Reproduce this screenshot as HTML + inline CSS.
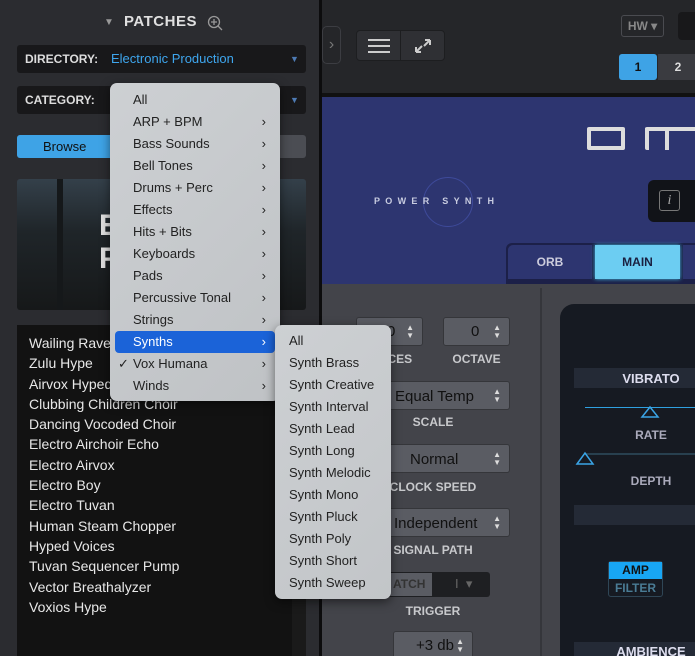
<!DOCTYPE html>
<html><head><style>
*{margin:0;padding:0;box-sizing:border-box}
html,body{width:695px;height:656px;overflow:hidden}
body{background:#252629;font-family:"Liberation Sans",sans-serif;position:relative}
.a{position:absolute}
.lbl{color:#c8c9cc;font-weight:bold;font-size:12px;text-align:center}
.spin{background:#5a5c63;border:1px solid #35363a;border-radius:3px;color:#111;font-size:15px}
.arr{position:absolute;right:8px;top:50%;transform:translateY(-50%);color:#ddd;font-size:8px;line-height:8px}
.mi{position:absolute;left:0;width:100%;height:22px;line-height:22px;font-size:13px;color:#222;padding-left:23px}
.mi .c{position:absolute;right:14px;top:0;font-size:13px}
.li{height:20.3px;line-height:20.3px;color:#e8e8e8;font-size:14px}
</style></head><body>
<div class="a" style="left:0;top:0;width:695px;height:656px;overflow:hidden">
<!-- right top bar -->
<div class="a" style="left:320px;top:0;width:375px;height:95px;background:#252629"></div>
<div class="a" style="left:322px;top:26px;width:19px;height:38px;border:1px solid #3c3d42;border-radius:5px;color:#777;font-size:16px;line-height:36px;text-align:center">›</div>
<div class="a" style="left:356px;top:30px;width:89px;height:31px;background:#2f3034;border:1px solid #1d1e20;border-radius:4px"></div>
<div class="a" style="left:400px;top:31px;width:1px;height:29px;background:#1d1e20"></div>
<div class="a" style="left:368px;top:39px;width:22px;height:2px;background:#ccc;box-shadow:0 6px 0 #ccc,0 12px 0 #ccc"></div>
<svg class="a" style="left:412px;top:36px" width="22" height="20"><path d="M4 16L10 10M4 16V11M4 16H9M18 4L12 10M18 4H13M18 4V9" stroke="#ccc" stroke-width="2" fill="none"/></svg>
<div class="a" style="left:621px;top:15px;width:43px;height:22px;border:1px solid #4a4b50;border-radius:3px;color:#888;font-size:12px;font-weight:bold;line-height:20px;text-align:center">HW ▾</div>
<div class="a" style="left:678px;top:12px;width:20px;height:28px;background:#18181a;border-radius:4px"></div>
<div class="a" style="left:619px;top:54px;width:38px;height:26px;background:#3ea3e6;border-radius:3px;color:#111;font-size:12px;font-weight:bold;line-height:26px;text-align:center">1</div>
<div class="a" style="left:658px;top:54px;width:40px;height:26px;background:#3a3b40;color:#ddd;font-size:12px;font-weight:bold;line-height:26px;text-align:center">2</div>
<!-- blue header -->
<div class="a" style="left:322px;top:93px;width:373px;height:4px;background:#111"></div>
<div class="a" style="left:322px;top:97px;width:373px;height:187px;background:#2d3570"></div>
<div class="a" style="left:587px;top:127px;width:38px;height:23px;border:4px solid #ddd;border-radius:2px"></div>
<div class="a" style="left:645px;top:127px;width:60px;height:23px;border:4px solid #ddd;border-bottom:none;border-radius:2px"></div>
<div class="a" style="left:665px;top:130px;width:4px;height:20px;background:#ddd"></div>
<div class="a" style="left:423px;top:177px;width:50px;height:50px;border:1px solid #3e4a9a;border-radius:50%"></div>
<div class="a" style="left:374px;top:196px;color:#c8cce0;font-size:9px;letter-spacing:5.3px;font-weight:bold">POWER SYNTH</div>
<div class="a" style="left:648px;top:180px;width:60px;height:42px;background:#111318;border-radius:6px"></div>
<div class="a" style="left:659px;top:190px;width:21px;height:21px;border:1px solid #777;border-radius:3px;color:#aaa;font-family:'Liberation Serif',serif;font-style:italic;font-size:14px;text-align:center;line-height:19px">i</div>
<div class="a" style="left:506px;top:243px;width:190px;height:42px;background:#1c2048;border-radius:6px 0 0 0"></div>
<div class="a" style="left:508px;top:245px;width:84px;height:34px;background:#2d3570;border-radius:5px 0 0 0;color:#ccd;font-size:12px;font-weight:bold;text-align:center;line-height:34px">ORB</div>
<div class="a" style="left:595px;top:245px;width:85px;height:34px;background:#6ccdf2;color:#1a2040;font-size:12px;font-weight:bold;text-align:center;line-height:34px;box-shadow:0 0 4px #4bd">MAIN</div>
<div class="a" style="left:683px;top:245px;width:12px;height:34px;background:#2d3570"></div>
<!-- controls -->
<div class="a" style="left:322px;top:284px;width:373px;height:372px;background:#43444a"></div>
<div class="a" style="left:540px;top:288px;width:2px;height:368px;background:#35363b"></div>
<div class="a" style="left:560px;top:304px;width:135px;height:352px;background:#161a22;border-radius:14px 0 0 0"></div>
<div class="a" style="left:574px;top:368px;width:121px;height:20px;background:#242a36"></div>
<div class="a lbl" style="left:574px;top:371px;width:154px;color:#dde;font-size:13px">VIBRATO</div>
<div class="a" style="left:585px;top:407px;width:110px;height:1px;background:#2fa0e0"></div>
<svg class="a" style="left:640px;top:405px" width="20" height="14"><path d="M2 12L10 2L18 12Z" stroke="#3aa4e6" stroke-width="1.5" fill="none"/></svg>
<div class="a lbl" style="left:620px;top:428px;width:62px;color:#aab">RATE</div>
<div class="a" style="left:585px;top:453px;width:110px;height:2px;background:#28404f"></div>
<svg class="a" style="left:575px;top:450px" width="20" height="16"><path d="M2 14L10 3L18 14Z" stroke="#3aa4e6" stroke-width="1.5" fill="none"/></svg>
<div class="a lbl" style="left:620px;top:474px;width:62px;color:#aab">DEPTH</div>
<div class="a" style="left:574px;top:505px;width:121px;height:20px;background:#242a36"></div>
<div class="a" style="left:608px;top:561px;width:55px;height:36px;border:1px solid #2f4656;border-radius:3px"></div>
<div class="a" style="left:609px;top:562px;width:53px;height:17px;background:#18a6f4;color:#111;font-size:12px;font-weight:bold;text-align:center;line-height:17px">AMP</div>
<div class="a" style="left:609px;top:580px;width:53px;height:16px;color:#4a7c95;font-size:12px;font-weight:bold;text-align:center;line-height:16px">FILTER</div>
<div class="a" style="left:574px;top:642px;width:121px;height:20px;background:#242a36"></div>
<div class="a lbl" style="left:574px;top:644px;width:154px;color:#dde;font-size:13px">AMBIENCE</div>

<div class="a spin" style="left:356px;top:317px;width:67px;height:29px"><span class="a" style="left:30px;top:5px">0</span><span class="arr">▲<br>▼</span></div>
<div class="a spin" style="left:443px;top:317px;width:67px;height:29px"><span class="a" style="left:27px;top:5px">0</span><span class="arr">▲<br>▼</span></div>
<div class="a lbl" style="left:356px;top:352px;width:67px">VOICES</div>
<div class="a lbl" style="left:443px;top:352px;width:67px">OCTAVE</div>
<div class="a spin" style="left:356px;top:381px;width:154px;height:29px"><span class="a" style="left:38px;top:6px">Equal Temp</span><span class="arr">▲<br>▼</span></div>
<div class="a lbl" style="left:356px;top:415px;width:154px">SCALE</div>
<div class="a spin" style="left:356px;top:444px;width:154px;height:29px"><span class="a" style="left:53px;top:6px">Normal</span><span class="arr">▲<br>▼</span></div>
<div class="a lbl" style="left:356px;top:480px;width:154px">CLOCK SPEED</div>
<div class="a spin" style="left:356px;top:508px;width:154px;height:29px"><span class="a" style="left:37px;top:6px">Independent</span><span class="arr">▲<br>▼</span></div>
<div class="a lbl" style="left:356px;top:543px;width:154px">SIGNAL PATH</div>
<div class="a" style="left:356px;top:572px;width:134px;height:25px;background:#1e1f22;border-radius:3px"></div>
<div class="a" style="left:357px;top:573px;width:75px;height:23px;background:#5a5c63;color:#333;font-size:12px;font-weight:bold;line-height:23px;padding-left:36px">ATCH</div>
<div class="a" style="left:455px;top:576px;color:#666;font-size:13px">I &nbsp;▾</div>
<div class="a lbl" style="left:356px;top:604px;width:154px">TRIGGER</div>
<div class="a spin" style="left:393px;top:631px;width:80px;height:29px"><span class="a" style="left:22px;top:5px">+3 db</span><span class="arr">▲<br>▼</span></div>

<!-- left panel -->
<div class="a" style="left:0;top:0;width:322px;height:656px;background:#2b2c30;border-right:3px solid #0c0c0d"></div>
<div class="a" style="left:104px;top:17px;width:12px;color:#999;font-size:10px">▼</div>
<div class="a" style="left:124px;top:13px;color:#e0e0e0;font-size:15px;font-weight:bold;letter-spacing:.5px">PATCHES</div>
<svg class="a" style="left:206px;top:14px" width="18" height="18"><circle cx="8" cy="8" r="5.5" stroke="#999" stroke-width="1.3" fill="none"/><path d="M12 12L16 16M8 5V11M5 8H11" stroke="#999" stroke-width="1.3"/></svg>
<div class="a" style="left:17px;top:45px;width:289px;height:28px;background:#18181a;border-radius:3px"></div>
<div class="a" style="left:25px;top:52px;color:#ddd;font-size:12px;font-weight:bold">DIRECTORY:</div>
<div class="a" style="left:111px;top:51px;color:#3ea6ee;font-size:13px">Electronic Production</div>
<div class="a" style="left:290px;top:54px;color:#4d7ab3;font-size:9px">▼</div>
<div class="a" style="left:17px;top:86px;width:289px;height:28px;background:#18181a;border-radius:3px"></div>
<div class="a" style="left:25px;top:93px;color:#ddd;font-size:12px;font-weight:bold">CATEGORY:</div>
<div class="a" style="left:290px;top:95px;color:#4d7ab3;font-size:9px">▼</div>
<div class="a" style="left:17px;top:135px;width:289px;height:23px;background:#4b4d53;border-radius:3px"></div>
<div class="a" style="left:17px;top:135px;width:100px;height:23px;background:#3ea3e6;border-radius:3px 0 0 3px;color:#111;font-size:13px;line-height:23px;padding-left:26px">Browse</div>
<div class="a" style="left:17px;top:179px;width:289px;height:131px;background:linear-gradient(180deg,#34404a 0%,#1f2529 40%,#161819 100%);border-radius:3px;overflow:hidden">
<div class="a" style="left:40px;top:0;width:6px;height:131px;background:#15181a"></div>
<div class="a" style="left:82px;top:30px;color:#e0e0e0;font-size:30px;font-weight:bold;line-height:33px">E<br>P</div>
</div>
<div class="a" style="left:17px;top:325px;width:289px;height:331px;background:#121212"></div>
<div class="a" style="left:292px;top:325px;width:14px;height:331px;background:#1a1a1a"></div>
<div class="a" style="left:29px;top:333px">
<div class="li">Wailing Rave</div><div class="li">Zulu Hype</div><div class="li">Airvox Hyped</div><div class="li">Clubbing Children Choir</div><div class="li">Dancing Vocoded Choir</div><div class="li">Electro Airchoir Echo</div><div class="li">Electro Airvox</div><div class="li">Electro Boy</div><div class="li">Electro Tuvan</div><div class="li">Human Steam Chopper</div><div class="li">Hyped Voices</div><div class="li">Tuvan Sequencer Pump</div><div class="li">Vector Breathalyzer</div><div class="li">Voxios Hype</div>
</div>

<!-- menu 1 -->
<div class="a" style="left:110px;top:83px;width:170px;height:318px;background:linear-gradient(135deg,#cdd0d3,#bfc2c5);border-radius:7px;box-shadow:0 3px 10px rgba(0,0,0,.5)">
<div class="mi" style="top:6px">All</div>
<div class="mi" style="top:28px">ARP + BPM<span class="c">›</span></div>
<div class="mi" style="top:50px">Bass Sounds<span class="c">›</span></div>
<div class="mi" style="top:72px">Bell Tones<span class="c">›</span></div>
<div class="mi" style="top:94px">Drums + Perc<span class="c">›</span></div>
<div class="mi" style="top:116px">Effects<span class="c">›</span></div>
<div class="mi" style="top:138px">Hits + Bits<span class="c">›</span></div>
<div class="mi" style="top:160px">Keyboards<span class="c">›</span></div>
<div class="mi" style="top:182px">Pads<span class="c">›</span></div>
<div class="mi" style="top:204px">Percussive Tonal<span class="c">›</span></div>
<div class="mi" style="top:226px">Strings<span class="c">›</span></div>
<div class="a" style="left:5px;top:248px;width:160px;height:22px;background:#1b63d8;border-radius:4px"></div>
<div class="mi" style="top:248px;color:#fff">Synths<span class="c" style="color:#fff">›</span></div>
<div class="mi" style="top:270px"><span class="a" style="left:8px">✓</span>Vox Humana<span class="c">›</span></div>
<div class="mi" style="top:292px">Winds<span class="c">›</span></div>
</div>
<!-- submenu -->
<div class="a" style="left:275px;top:325px;width:116px;height:274px;background:linear-gradient(135deg,#cdd0d3,#c2c5c8);border-radius:7px;box-shadow:0 3px 10px rgba(0,0,0,.5)">
<div class="mi" style="top:5px;padding-left:14px">All</div>
<div class="mi" style="top:27px;padding-left:14px">Synth Brass</div>
<div class="mi" style="top:49px;padding-left:14px">Synth Creative</div>
<div class="mi" style="top:71px;padding-left:14px">Synth Interval</div>
<div class="mi" style="top:93px;padding-left:14px">Synth Lead</div>
<div class="mi" style="top:115px;padding-left:14px">Synth Long</div>
<div class="mi" style="top:137px;padding-left:14px">Synth Melodic</div>
<div class="mi" style="top:159px;padding-left:14px">Synth Mono</div>
<div class="mi" style="top:181px;padding-left:14px">Synth Pluck</div>
<div class="mi" style="top:203px;padding-left:14px">Synth Poly</div>
<div class="mi" style="top:225px;padding-left:14px">Synth Short</div>
<div class="mi" style="top:247px;padding-left:14px">Synth Sweep</div>
</div>
</div>
</body></html>
